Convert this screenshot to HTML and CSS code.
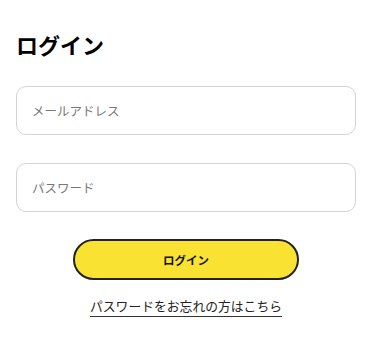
FILE: index.html
```html
<!DOCTYPE html>
<html lang="ja">
<head>
<meta charset="utf-8">
<link rel="stylesheet" href="styles.css">
</head>
<body>
<main class="page">
  <h1 class="title">ログイン</h1>
  <form class="form">
    <div class="field"><span class="placeholder">メールアドレス</span></div>
    <div class="field"><span class="placeholder">パスワード</span></div>
    <div class="actions">
      <button type="button" class="btn">ログイン</button>
      <a class="link" href="#">パスワードをお忘れの方はこちら</a>
    </div>
  </form>
</main>
</body>
</html>
```
FILE: styles.css
```css
html, body {
  margin: 0;
  background: #ffffff;
}
body {
  font-family: "Noto Sans CJK JP", "Noto Sans", sans-serif;
  color: #111;
}
.page {
  padding: 28px 12px 0 16px;
}
.title {
  margin: 0;
  font-size: 22px;
  line-height: 32px;
  font-weight: 700;
  color: #000;
}
.form {
  margin-top: 26px;
  display: flex;
  flex-direction: column;
  gap: 28px;
}
.field {
  height: 49px;
  box-sizing: border-box;
  border: 1px solid #d4d4d4;
  border-radius: 10px;
  display: flex;
  align-items: center;
  padding-left: 15px;
}
.placeholder {
  font-size: 12.5px;
  color: #777;
}
.actions {
  display: flex;
  flex-direction: column;
  align-items: center;
  margin-top: -1px;
}
.btn {
  width: 226px;
  height: 41px;
  box-sizing: border-box;
  border: 2px solid #222;
  border-radius: 21px;
  background: #f9e231;
  font-family: inherit;
  font-size: 11.5px;
  font-weight: 700;
  color: #111;
  padding: 0;
}
.link {
  margin-top: 17px;
  font-size: 12.8px;
  line-height: 18px;
  color: #222;
  text-decoration: none;
  border-bottom: 1.5px solid #333;
  padding-bottom: 1px;
}
```
